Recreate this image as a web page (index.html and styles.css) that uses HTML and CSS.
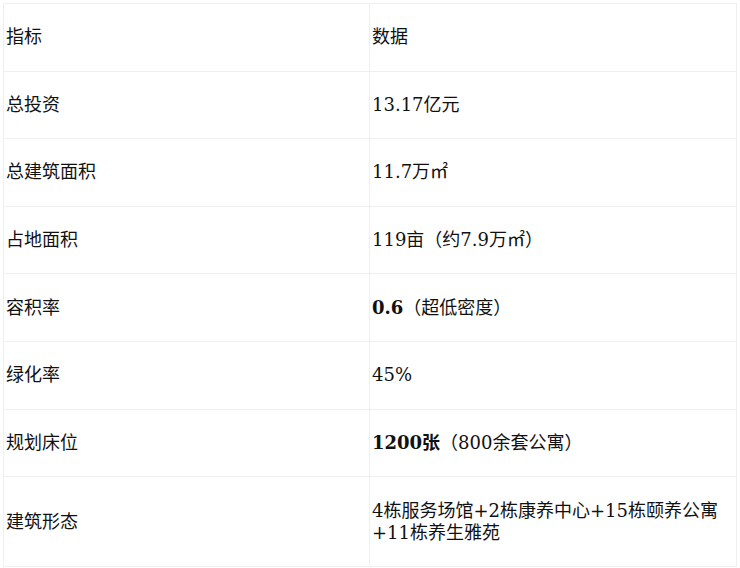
FILE: index.html
```html
<!DOCTYPE html>
<html lang="zh">
<head>
<meta charset="utf-8">
<link rel="stylesheet" href="styles.css">
</head>
<body>
<table class="data">
  <tr><td class="k">指标</td><td class="v">数据</td></tr>
  <tr><td class="k">总投资</td><td class="v">13.17亿元</td></tr>
  <tr><td class="k">总建筑面积</td><td class="v">11.7万㎡</td></tr>
  <tr><td class="k">占地面积</td><td class="v">119亩（约7.9万㎡）</td></tr>
  <tr><td class="k">容积率</td><td class="v"><b>0.6</b>（超低密度）</td></tr>
  <tr><td class="k">绿化率</td><td class="v">45%</td></tr>
  <tr><td class="k">规划床位</td><td class="v"><b>1200张</b>（800余套公寓）</td></tr>
  <tr class="last"><td class="k">建筑形态</td><td class="v">4栋服务场馆+2栋康养中心+15栋颐养公寓+11栋养生雅苑</td></tr>
</table>
</body>
</html>
```
FILE: styles.css
```css
html, body {
  margin: 0;
  padding: 0;
  background: #fff;
}
body {
  padding: 3px;
  font-family: "DejaVu Serif", "Noto Sans CJK SC", serif;
  font-size: 18px;
  color: #111;
}
.data {
  border-collapse: collapse;
  width: 734px;
  table-layout: fixed;
}
.data td {
  border: 1px solid #efefef;
  padding: 0 2px;
  height: 66.6px;
  line-height: 22px;
  vertical-align: middle;
}
.data td.k {
  width: 361px;
}
.data tr.last td {
  height: 89px;
}
.data b {
  font-weight: bold;
}
```
